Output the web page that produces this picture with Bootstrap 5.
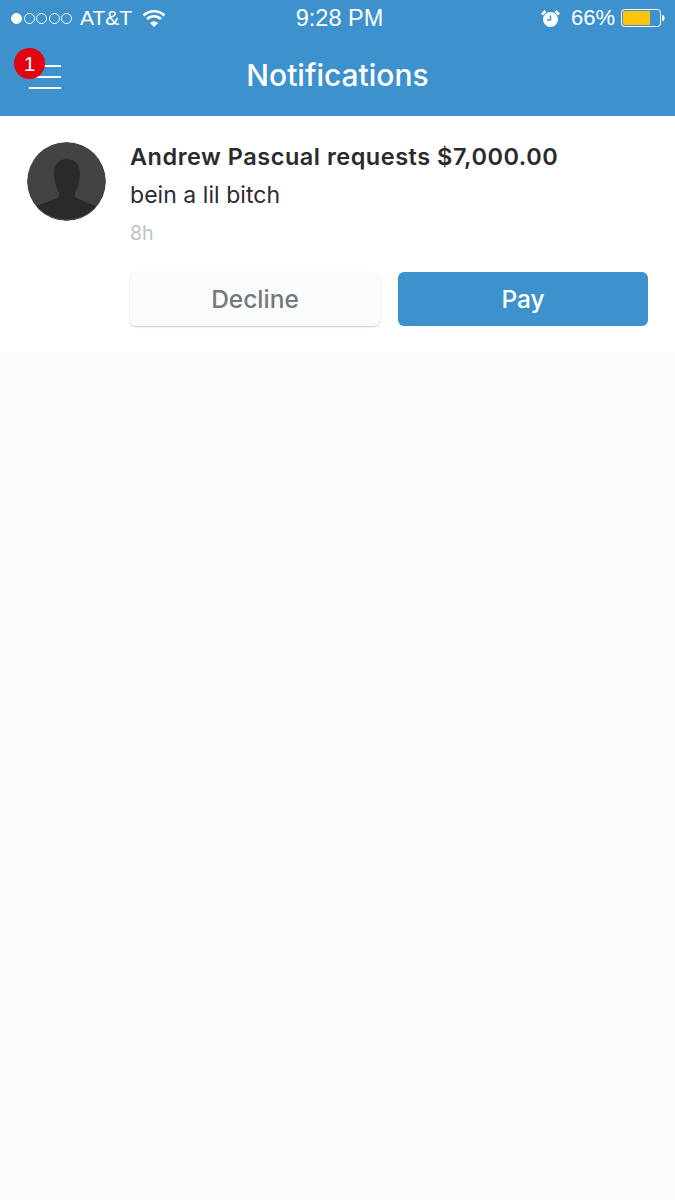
<!doctype html>
<html lang="en">
<head>
<meta charset="utf-8">
<title>Notifications</title>
<link rel="stylesheet" href="https://cdn.jsdelivr.net/npm/bootstrap@5.3.0/dist/css/bootstrap.min.css">
<style>
html,body{height:100%}
body{background:#fafbfd;font-family:Inter,"Liberation Sans",sans-serif;color:#2b2b2e;overflow:hidden}
.app-top{background:#3d92ce;height:116px;color:#fff}
.status-row{height:36px;padding:0 10px 0 11px;font-family:"Liberation Sans",sans-serif;font-size:21px;line-height:36px}
.status-dots{gap:1.5px}
.sig-dot{width:11px;height:11px;border-radius:50%;border:1px solid #fff;display:block}
.sig-dot.on{background:#fff}
.carrier{margin-left:8px}
.wifi{margin-left:10px}
.status-time{left:0;right:0;top:0;padding-left:4px;text-align:center;font-size:23.5px;line-height:36px;font-weight:400}
.pct{margin-left:11px;font-size:22px}
.batt{margin-left:6px}
.title-row{height:80px}
.title-text{font-size:30px;font-weight:500;line-height:78px;margin:0;text-align:center;color:#fff}
.menu-wrap{left:14px;top:12px;width:50px;height:50px}
.menu-line{position:absolute;left:15px;width:32px;height:2px;background:#fff}
.line-a{top:17px}
.line-b{top:28px}
.line-c{top:39px}
.note-badge{position:absolute;left:0;top:0;width:31px;height:31px;border-radius:50%;background:#e3000f;color:#fff;font-size:21px;line-height:31px;text-align:center;font-family:"Liberation Sans",sans-serif}
.note-card{background:#fff;height:237px;padding:26px 27px 0}
.avatar-box{width:79px;height:79px;border-radius:50%;overflow:hidden;flex:none;display:block}
.note-body{margin-left:24px;flex:1;min-width:0}
.note-head{font-size:23.5px;font-weight:600;line-height:30px;letter-spacing:.52px;margin:0;color:#2b2b2e;white-space:nowrap}
.note-msg{font-size:23px;line-height:30px;margin:8px 0 0;color:#2b2b2e;letter-spacing:.05px}
.note-age{font-size:19.5px;line-height:24px;margin:11px 0 0;color:#c2c2c4}
.btn-row{gap:18px;margin-top:27px}
.act-btn{flex:1;height:54px;border-radius:6px;font-size:24.5px;font-weight:450;line-height:54px;padding:0;border:0}
.act-decline,.act-decline:hover{background:#fafbfd;color:#737a7a;box-shadow:0 1px 2px rgba(0,0,0,.2)}
.act-pay,.act-pay:hover{background:#3d92ce;color:#fff}
</style>
</head>
<body>
<header class="app-top">
  <div class="status-row d-flex align-items-center justify-content-between position-relative">
    <div class="d-flex align-items-center">
      <span class="status-dots d-flex">
        <span class="sig-dot on"></span><span class="sig-dot"></span><span class="sig-dot"></span><span class="sig-dot"></span><span class="sig-dot"></span>
      </span>
      <span class="carrier">AT&amp;T</span>
      <svg class="wifi" width="24" height="18" viewBox="0 0 24 18" aria-hidden="true"><path d="M1.5 6.500a15 15 0 0 1 21 0M5 10a10 10 0 0 1 14 0" fill="none" stroke="#fff" stroke-width="2.500"/><path d="M12 18l-4-4a5.700 5.700 0 0 1 8 0z" fill="#fff"/></svg>
    </div>
    <div class="status-time position-absolute">9:28 PM</div>
    <div class="d-flex align-items-center">
      <svg width="19" height="19" viewBox="0 0 19 19" aria-hidden="true"><circle cx="9.500" cy="10.500" r="7.500" fill="#fff"/><path d="M1 5.500 4.500 2M18 5.500 14.500 2" stroke="#fff" stroke-width="2.500"/><path d="M9.500 6.500v4.500h-3.500" fill="none" stroke="#3d92ce" stroke-width="1.400"/></svg>
      <span class="pct">66%</span>
      <svg class="batt" width="44" height="18" viewBox="0 0 44 18" aria-hidden="true"><rect x=".5" y=".5" width="39" height="17" rx="3" fill="none" stroke="#fff"/><rect x="2" y="2" width="27" height="14" rx="1" fill="#fdc507"/><path d="M41 6c2 0 2.500 1 2.500 3s-.5 3-2.500 3z" fill="#fff"/></svg>
    </div>
  </div>
  <div class="title-row position-relative">
    <h1 class="title-text">Notifications</h1>
    <div class="menu-wrap position-absolute">
      <span class="menu-line line-a"></span>
      <span class="menu-line line-b"></span>
      <span class="menu-line line-c"></span>
      <span class="note-badge">1</span>
    </div>
  </div>
</header>
<main class="note-card d-flex">
  <svg class="avatar-box" viewBox="0 0 79 79" aria-hidden="true">
    <circle cx="39.500" cy="39.500" r="39.500" fill="#434343"/>
    <path d="M27 31c0-9 5.500-14 13-14s13 5 13 14c0 8-2.500 15-5 20v4c3 2 11 5 21 9a39.500 39.500 0 0 1-59 0c9-4 19-7 22-9v-4c-2.500-5-5-12-5-20z" fill="#2a2a2a"/>
  </svg>
  <div class="note-body">
    <p class="note-head">Andrew Pascual requests $7,000.00</p>
    <p class="note-msg">bein a lil bitch</p>
    <p class="note-age">8h</p>
    <div class="btn-row d-flex">
      <button type="button" class="btn act-btn act-decline">Decline</button>
      <button type="button" class="btn act-btn act-pay">Pay</button>
    </div>
  </div>
</main>
<script src="https://cdn.jsdelivr.net/npm/bootstrap@5.3.0/dist/js/bootstrap.bundle.min.js"></script>
</body>
</html>
